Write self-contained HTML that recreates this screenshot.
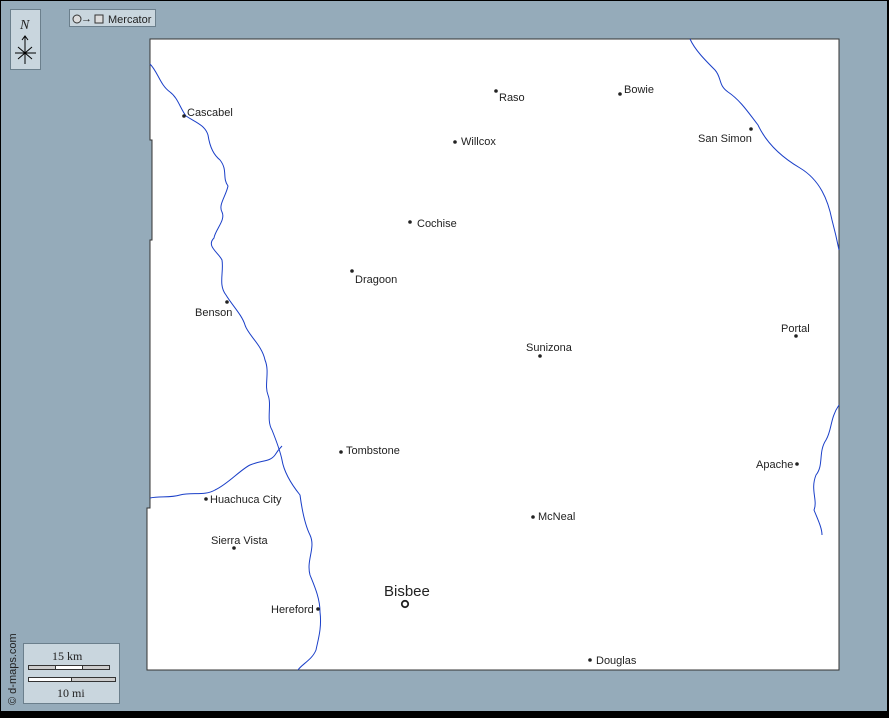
<!DOCTYPE html>
<html><head><style>
html,body{margin:0;padding:0}
body{width:889px;height:713px;overflow:hidden;background:#000;font-family:"Liberation Sans",sans-serif}
svg text{font-family:"Liberation Sans",sans-serif;font-size:11px;fill:#222}
</style></head><body>
<svg width="889" height="713" viewBox="0 0 889 713" xmlns="http://www.w3.org/2000/svg">
<rect x="1" y="1" width="886" height="710" fill="#95abba"/>
<polygon points="150,39 839,39 839,670 147,670 147,508 150,508 150,240 152,240 152,140 150,140" fill="#fff" stroke="#333" stroke-width="1"/>
<g fill="none" stroke="#1a3fc8" stroke-width="1">
<path d="M150,64 C158,72 160,85 170,92 C178,98 180,108 186,116 C195,122 205,125 208,135 C210,148 214,155 220,160 C228,170 222,178 228,186 C226,196 218,205 222,212 C226,220 215,230 214,238 C206,246 218,252 222,260 C224,272 218,285 226,295 C232,305 242,315 245,325 C248,335 262,345 265,360 C270,372 264,385 268,395 C272,405 266,420 272,430 C276,440 280,450 282,460 C284,472 292,485 300,495 C302,510 305,525 310,535 C316,548 306,560 310,575 C314,585 320,598 320,612 C322,628 318,640 316,650 C312,660 302,664 298,670"/>
<path d="M150,498 C160,496 170,498 180,495 C192,492 205,496 215,490 C228,484 240,470 250,465 C262,460 270,462 275,455 C278,450 280,448 282,446"/>
<path d="M690,39 C695,50 705,60 715,70 C722,78 718,85 728,92 C740,100 748,112 758,125 C765,140 778,155 800,168 C820,180 828,200 832,220 C836,235 838,245 839,250"/>
<path d="M839,405 C830,418 832,430 826,440 C818,452 824,465 816,475 C810,490 818,500 814,510 C818,520 822,528 822,535"/>
</g>
<g fill="#222">
<circle cx="184" cy="116" r="1.8"/><circle cx="496" cy="91" r="1.8"/><circle cx="620" cy="94" r="1.8"/>
<circle cx="455" cy="142" r="1.8"/><circle cx="751" cy="129" r="1.8"/><circle cx="410" cy="222" r="1.8"/>
<circle cx="352" cy="271" r="1.8"/><circle cx="227" cy="302" r="1.8"/><circle cx="796" cy="336" r="1.8"/>
<circle cx="540" cy="356" r="1.8"/><circle cx="341" cy="452" r="1.8"/><circle cx="797" cy="464" r="1.8"/>
<circle cx="206" cy="499" r="1.8"/><circle cx="533" cy="517" r="1.8"/><circle cx="234" cy="548" r="1.8"/>
<circle cx="318" cy="609" r="1.8"/><circle cx="590" cy="660" r="1.8"/>
</g>
<circle cx="405" cy="604" r="3.2" fill="none" stroke="#222" stroke-width="1.8"/>
<text x="187" y="116">Cascabel</text>
<text x="499" y="101">Raso</text>
<text x="624" y="93">Bowie</text>
<text x="461" y="145">Willcox</text>
<text x="698" y="142">San Simon</text>
<text x="417" y="227">Cochise</text>
<text x="355" y="283">Dragoon</text>
<text x="195" y="316">Benson</text>
<text x="781" y="332">Portal</text>
<text x="526" y="351">Sunizona</text>
<text x="346" y="454">Tombstone</text>
<text x="756" y="468">Apache</text>
<text x="210" y="503">Huachuca City</text>
<text x="538" y="520">McNeal</text>
<text x="211" y="544">Sierra Vista</text>
<text x="271" y="613">Hereford</text>
<text x="384" y="596" style="font-size:15px">Bisbee</text>
<text x="596" y="664">Douglas</text>
<rect x="10.5" y="9.5" width="30" height="60" fill="#c9d6de" stroke="#6b7f8c"/>
<text x="20" y="29" style="font-family:'Liberation Serif',serif;font-style:italic;font-size:14px">N</text>
<line x1="25" y1="36" x2="25" y2="64" stroke="#000"/>
<path d="M22,40 L25,36 L28,40" fill="none" stroke="#000"/>
<line x1="15" y1="53" x2="36" y2="53" stroke="#000"/>
<line x1="18" y1="47" x2="32" y2="59" stroke="#000"/><line x1="32" y1="47" x2="18" y2="59" stroke="#000"/>
<rect x="69.5" y="9.5" width="86" height="17" fill="#c9d6de" stroke="#6b7f8c"/>
<circle cx="77" cy="19" r="4" fill="#ddd" stroke="#333"/>
<text x="81" y="22" style="font-size:11px">→</text>
<rect x="95" y="15" width="8" height="8" fill="#ddd" stroke="#333"/>
<text x="108" y="23">Mercator</text>
<rect x="23.5" y="643.5" width="96" height="60" fill="#c9d6de" stroke="#6b7f8c"/>
<text x="52" y="660" style="font-family:'Liberation Serif',serif;font-size:12px">15 km</text>
<rect x="28.5" y="665.5" width="81" height="4" fill="#ccc" stroke="#333"/>
<rect x="55.5" y="665.5" width="27" height="4" fill="#fff" stroke="#333"/>
<rect x="28.5" y="677.5" width="87" height="4" fill="#ccc" stroke="#333"/>
<rect x="28.5" y="677.5" width="43" height="4" fill="#fff" stroke="#333"/>
<text x="57" y="697" style="font-family:'Liberation Serif',serif;font-size:12px">10 mi</text>
<text transform="translate(16,705) rotate(-90)" style="font-size:11px">© d-maps.com</text>
</svg>
</body></html>
